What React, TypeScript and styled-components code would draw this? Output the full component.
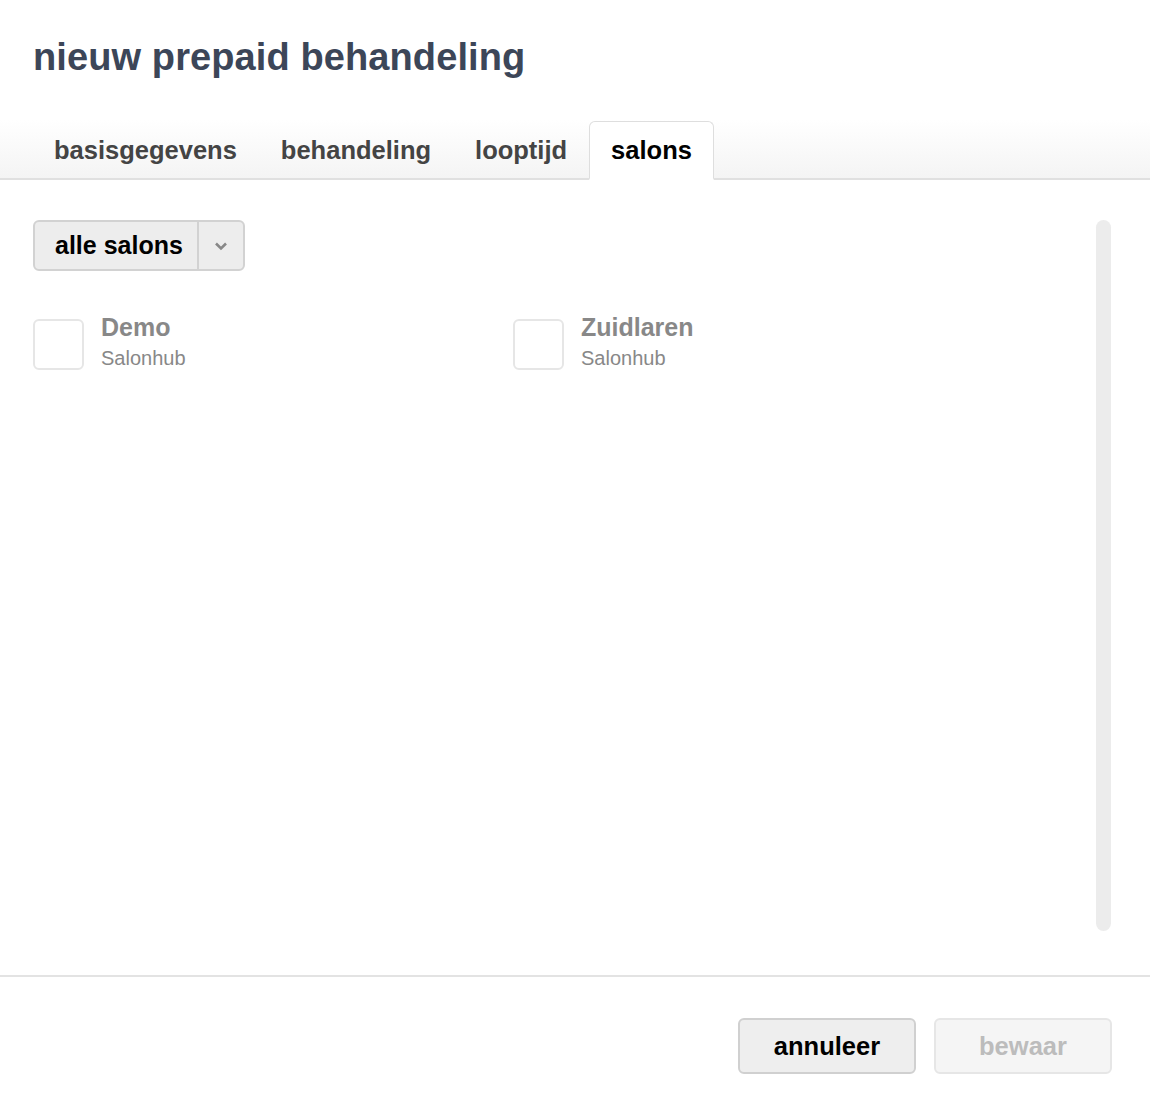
import React, { useState } from "react";
import styled, { createGlobalStyle } from "styled-components";

const GlobalStyle = createGlobalStyle`
  html, body {
    margin: 0;
    padding: 0;
    background: #fff;
    font-family: "Liberation Sans", Arial, Helvetica, sans-serif;
  }
`

const Modal = styled.div`
  width: 1150px;
  height: 1114px;
  display: flex;
  flex-direction: column;
  background: #fff;
  box-sizing: border-box;
`

const Header = styled.header`
  height: 120px;
  padding: 0 33px;
  box-sizing: border-box;
  display: flex;
  align-items: center;
  & h1 {
    margin: 0 0 6px 0;
    font-size: 38px;
    font-weight: bold;
    color: #3c4658;
    letter-spacing: 0.1px;
  }
`

const TabBar = styled.nav`
  height: 60px;
  display: flex;
  align-items: flex-end;
  padding-left: 32px;
  box-sizing: border-box;
  background: linear-gradient(#ffffff, #f4f4f4);
  border-bottom: 2px solid #e0e0e0;
`

const Tab = styled.div<{ $active?: boolean }>`
  height: 59px;
  padding: 0 21px;
  margin-bottom: -2px;
  display: flex;
  align-items: center;
  font-size: 25.5px;
  font-weight: bold;
  color: ${(p) => (p.$active ? "#000" : "#444")};
  box-sizing: border-box;
  border: 1px solid ${(p) => (p.$active ? "#dedede" : "transparent")};
  border-bottom: 2px solid ${(p) => (p.$active ? "#fff" : "transparent")};
  border-radius: 6px 6px 0 0;
  background: ${(p) => (p.$active ? "#fff" : "transparent")};
  cursor: pointer;
`

const Body = styled.main`
  flex: 1;
  display: flex;
  padding: 40px 39px 44px 33px;
  box-sizing: border-box;
  border-bottom: 2px solid #e3e3e3;
`

const Content = styled.div`
  flex: 1;
`

const ScrollTrack = styled.div`
  width: 15px;
  background: #ececec;
  border-radius: 8px;
`

const SplitButton = styled.div`
  display: inline-flex;
  height: 51px;
  border: 2px solid #d2d2d2;
  border-radius: 6px;
  background: #ededed;
  box-sizing: border-box;
  overflow: hidden;
`

const SplitLabel = styled.span`
  display: flex;
  align-items: center;
  padding: 0 14px 0 20px;
  font-size: 25px;
  font-weight: bold;
  color: #000;
  border-right: 2px solid #d2d2d2;
`

const SplitCaret = styled.span`
  width: 44px;
  display: flex;
  align-items: center;
  justify-content: center;
  color: #888;
`

const SalonGrid = styled.div`
  display: grid;
  grid-template-columns: 480px 480px;
  margin-top: 48px;
`

const SalonItem = styled.label`
  display: flex;
  align-items: flex-start;
  gap: 17px;
  cursor: pointer;
`

const Box = styled.span<{ $checked?: boolean }>`
  width: 51px;
  height: 51px;
  border: 2px solid #e6e6e6;
  border-radius: 6px;
  box-sizing: border-box;
  background: #fff;
  display: flex;
  align-items: center;
  justify-content: center;
  color: #555;
`

const SalonText = styled.div`
  display: flex;
  flex-direction: column;
  color: #888;
  & strong {
    font-size: 25px;
    line-height: 28px;
    margin-top: -6px;
  }
  & span {
    font-size: 20px;
    line-height: 24px;
    margin-top: 5px;
  }
`

const Footer = styled.footer`
  height: 137px;
  display: flex;
  justify-content: flex-end;
  gap: 18px;
  padding: 41px 38px 0 0;
  box-sizing: border-box;
`

const Button = styled.button<{ $disabled?: boolean }>`
  width: 178px;
  height: 56px;
  border-radius: 6px;
  font-family: inherit;
  font-size: 25.5px;
  font-weight: bold;
  border: 2px solid ${(p) => (p.$disabled ? "#e6e6e6" : "#d0d0d0")};
  background: ${(p) => (p.$disabled ? "#f5f5f5" : "#eeeeee")};
  color: ${(p) => (p.$disabled ? "#bcbcbc" : "#000")};
  cursor: ${(p) => (p.$disabled ? "default" : "pointer")};
`

const tabs = ["basisgegevens", "behandeling", "looptijd", "salons"]
const salons = [
    { name: "Demo", org: "Salonhub" },
    { name: "Zuidlaren", org: "Salonhub" },
]

export default function App() {
    const [active, setActive] = useState("salons")
    const [checked, setChecked] = useState<string[]>([])

    const toggle = (name: string) => {
        setChecked((prev) => prev.includes(name) ? prev.filter((n) => n !== name) : [...prev, name])
    }

    return (
        <>
            <GlobalStyle />
            <Modal>
                <Header><h1>nieuw prepaid behandeling</h1></Header>
                <TabBar>
                    {tabs.map((t) => (
                        <Tab key={t} $active={t === active} onClick={() => setActive(t)}>{t}</Tab>
                    ))}
                </TabBar>
                <Body>
                    <Content>
                        <SplitButton>
                            <SplitLabel>alle salons</SplitLabel>
                            <SplitCaret>
                                <svg width="14" height="10" viewBox="0 0 14 10">
                                    <path d="M2 2.5 L7 7.5 L12 2.5" fill="none" stroke="#888" strokeWidth="2.6" />
                                </svg>
                            </SplitCaret>
                        </SplitButton>
                        <SalonGrid>
                            {salons.map((s) => (
                                <SalonItem key={s.name} onClick={() => toggle(s.name)}>
                                    <Box $checked={checked.includes(s.name)}>{checked.includes(s.name) ? "✓" : null}</Box>
                                    <SalonText>
                                        <strong>{s.name}</strong>
                                        <span>{s.org}</span>
                                    </SalonText>
                                </SalonItem>
                            ))}
                        </SalonGrid>
                    </Content>
                    <ScrollTrack />
                </Body>
                <Footer>
                    <Button>annuleer</Button>
                    <Button $disabled disabled>bewaar</Button>
                </Footer>
            </Modal>
        </>
    )
}
